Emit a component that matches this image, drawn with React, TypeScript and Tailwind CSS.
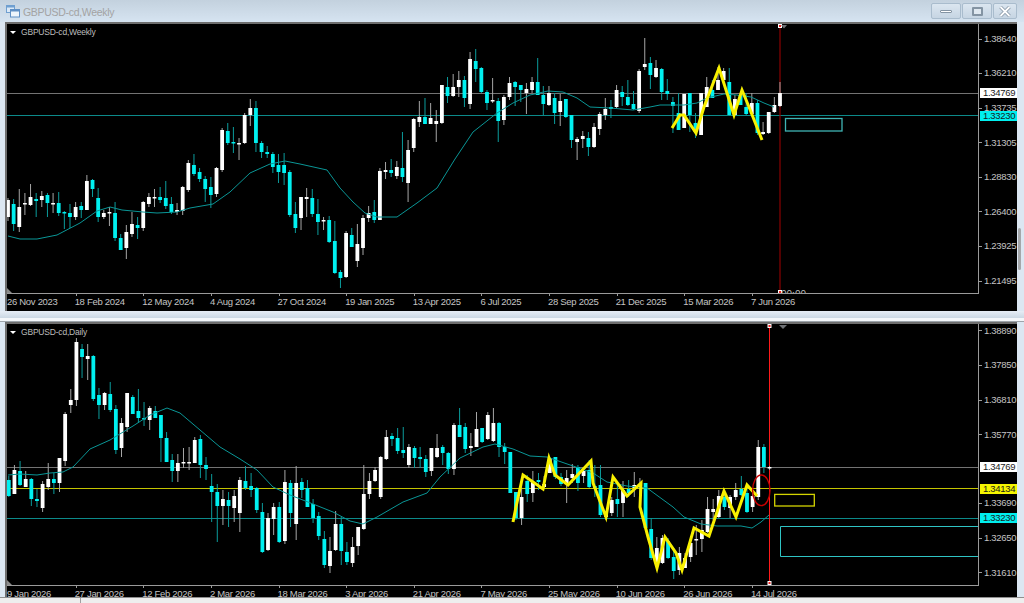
type Candle = [number, number, number, number, number];
type Point = [number, number];

// [high, body top, body bottom, low, 1 = white / 0 = cyan], in page pixels
const weeklyCandles: Candle[] = [
  [198,200,217,221,1],[199,204,224,231,0],[189,207,227,232,1],[193,203,204,215,1],[184,197,205,206,1],[193,199,201,217,0],
  [191,196,200,207,1],[193,195,203,217,0],[193,203,204,213,1],[192,203,213,216,0],[211,212,213,229,0],[204,213,217,228,0],
  [202,207,217,220,1],[202,206,210,218,0],[175,181,210,210,1],[179,180,189,197,0],[188,198,217,222,0],[210,213,217,219,1],
  [207,212,213,226,1],[202,213,238,241,0],[234,238,250,250,0],[225,232,248,259,1],[212,224,234,237,1],[217,225,228,239,0],
  [201,202,228,231,1],[193,197,204,207,1],[189,197,198,207,1],[187,197,200,203,0],[181,198,206,209,0],[197,204,212,214,0],
  [203,210,212,215,1],[186,187,211,215,1],[160,163,190,192,1],[154,165,174,176,0],[168,172,179,182,0],[176,179,189,202,0],
  [177,187,195,208,0],[167,168,194,197,1],[128,130,170,172,1],[123,131,143,145,0],[127,142,143,153,0],[138,143,144,160,1],
  [113,115,143,144,1],[99,108,115,126,1],[101,108,143,152,0],[141,143,152,158,0],[146,152,154,158,0],[152,154,167,173,0],
  [154,165,172,183,0],[153,165,173,185,0],[170,172,215,217,0],[202,214,228,233,0],[197,197,218,230,1],[188,197,199,217,1],
  [189,198,214,217,0],[199,214,222,235,0],[217,220,221,230,1],[216,220,242,243,0],[221,241,273,274,0],[270,272,278,288,0],
  [231,233,277,278,1],[228,235,247,247,0],[224,244,261,267,1],[215,218,248,255,1],[206,213,218,222,1],[200,212,220,223,0],
  [168,171,220,220,1],[162,170,172,179,1],[159,170,173,177,0],[161,167,176,179,1],[132,168,177,182,0],[140,150,183,202,1],
  [118,119,148,152,1],[101,117,122,127,1],[98,117,124,124,0],[103,118,124,124,1],[110,121,124,142,1],[85,85,123,124,1],
  [77,87,96,103,0],[74,87,96,97,1],[71,80,87,97,1],[76,80,98,107,0],[52,59,104,109,1],[49,61,69,82,0],
  [67,68,92,93,0],[90,92,103,110,0],[78,100,101,103,1],[98,101,121,142,0],[95,97,120,125,1],[77,83,97,100,1],
  [81,82,87,106,0],[85,85,90,102,0],[83,89,93,114,1],[77,82,90,93,1],[58,82,95,95,0],[86,95,104,115,0],
  [86,93,105,106,1],[93,98,113,124,0],[94,101,112,126,1],[99,99,117,118,0],[115,115,140,148,0],[137,139,142,160,1],
  [131,136,139,148,1],[132,138,147,156,0],[123,127,147,148,1],[112,114,129,135,1],[98,109,115,120,1],[100,107,109,118,0],
  [85,90,107,108,1],[86,92,97,106,0],[80,97,105,106,0],[91,104,109,110,0],[69,71,111,113,1],[38,64,67,70,1],
  [57,63,75,89,0],[60,68,77,78,1],[68,69,92,100,0],[79,91,94,100,0],[97,102,106,133,0],[93,113,130,130,0],
  [94,94,128,128,1],[93,93,115,132,0],[113,123,132,138,0],[93,93,135,135,1],[77,87,107,107,1],[80,90,98,98,0],
  [67,80,90,90,1],[68,71,80,80,1],[68,82,115,116,0],[95,99,115,115,1],[93,95,105,105,0],[93,107,114,115,0],
  [93,103,114,114,1],[100,103,133,135,0],[122,132,134,135,1],[112,112,133,134,1],[97,105,112,113,1],[82,93,106,107,1],
];

const dailyCandles: Candle[] = [
  [476,480,496,497,0],[465,470,494,494,1],[461,471,485,486,0],[471,479,487,487,1],[478,479,499,506,0],[489,499,501,507,0],
  [481,484,508,512,1],[463,479,487,490,1],[473,479,483,494,0],[458,458,483,492,1],[412,414,461,466,1],[389,400,405,413,1],
  [338,342,400,406,1],[344,349,357,378,0],[344,356,359,380,1],[355,356,399,401,0],[388,395,405,419,0],[392,393,405,410,1],
  [382,394,410,412,0],[405,409,450,454,0],[418,423,448,457,1],[393,393,427,432,1],[395,397,414,414,0],[389,411,418,423,0],
  [402,418,419,426,0],[406,408,420,430,1],[406,411,418,418,0],[415,415,438,462,0],[432,438,462,462,0],[454,460,471,482,0],
  [454,463,471,482,1],[448,462,463,468,1],[447,462,463,470,1],[437,440,463,463,1],[435,439,465,478,0],[457,465,469,480,0],
  [474,486,492,522,0],[484,492,506,542,0],[490,499,506,525,1],[492,500,506,527,0],[490,496,508,522,1],[477,480,513,532,1],
  [466,481,488,490,0],[473,486,490,497,0],[487,488,510,513,0],[503,512,552,553,0],[513,518,550,551,1],[503,507,519,535,1],
  [502,507,542,543,0],[470,482,541,544,1],[480,483,513,527,0],[466,483,524,540,1],[478,482,490,498,0],[480,488,507,507,0],
  [499,504,518,523,0],[512,516,536,540,0],[531,539,565,568,0],[537,551,566,573,1],[511,524,550,551,1],[517,524,551,565,0],
  [542,552,562,565,0],[537,547,563,567,1],[527,527,546,555,1],[465,494,529,530,1],[473,481,494,499,1],[467,470,481,482,1],
  [456,457,497,499,1],[430,437,459,460,1],[433,436,439,446,0],[428,438,451,454,0],[427,450,453,458,0],[444,447,465,468,1],
  [446,448,458,468,0],[447,457,459,468,0],[455,459,472,477,0],[448,448,471,476,1],[434,448,457,458,1],[445,447,453,465,0],
  [452,453,469,474,0],[423,425,469,475,1],[408,425,437,437,0],[423,427,449,453,0],[433,446,448,456,1],[412,429,447,447,1],
  [428,428,442,443,0],[412,415,439,440,1],[408,423,441,442,1],[422,423,447,457,0],[443,447,452,464,0],[452,452,493,493,0],
  [492,492,518,520,0],[477,497,518,525,1],[475,481,494,502,0],[471,482,493,502,1],[473,480,482,490,0],[476,484,487,488,1],
  [457,458,473,473,1],[457,457,477,479,0],[473,477,484,486,0],[470,478,483,503,1],[464,474,478,483,1],[465,467,483,491,0],
  [467,471,476,483,1],[460,470,487,488,0],[465,486,488,497,0],[465,485,515,517,0],[513,513,517,520,1],[497,500,513,516,1],
  [485,499,504,517,0],[481,490,503,517,1],[480,489,493,497,0],[472,485,488,497,1],[478,484,487,497,1],[483,483,528,528,0],
  [518,529,558,560,0],[537,548,562,570,1],[535,538,563,564,1],[538,541,558,559,0],[548,557,571,579,0],[547,553,570,575,1],
  [553,558,568,568,1],[537,543,557,562,1],[525,539,540,555,1],[520,530,539,552,1],[497,509,532,533,1],[499,509,512,520,1],
  [490,496,517,518,1],[490,497,507,510,0],[495,497,508,518,1],[483,490,497,500,1],[476,489,495,496,0],[484,493,512,513,0],
  [493,496,507,512,1],[440,447,497,500,1],[444,447,467,473,0],[466,467,468,470,1],
];

const weeklyMa: Point[] = [[8,236],[20,239],[37,239],[57,235],[80,223],[97,211],[110,207],[122,210],[143,212],[157,213],[177,212],[190,208],[213,204],[230,192],[250,173],[270,164],[285,161],[300,164],[327,170],[340,188],[353,202],[365,213],[377,217],[397,217],[417,203],[437,188],[455,159],[473,132],[497,113],[513,103],[530,95],[548,91],[563,92],[577,98],[590,107],[610,108],[633,110],[650,107],[660,105],[684,105],[697,103],[707,98],[724,94],[737,95],[751,97],[764,103],[774,107]];
const dailyMa: Point[] = [[8,475],[20,474],[37,475],[50,473],[63,472],[73,467],[90,449],[110,440],[133,426],[150,415],[167,408],[180,413],[200,430],[220,447],[240,459],[257,470],[273,487],[290,495],[313,504],[333,512],[350,521],[363,524],[377,517],[403,502],[427,493],[440,477],[460,458],[483,447],[495,444],[513,449],[530,456],[547,457],[573,466],[593,473],[607,482],[627,486],[647,488],[673,507],[684,517],[701,524],[717,526],[741,526],[752,528],[761,522],[769,515]];
const weeklyZigzag: Point[] = [[672,128],[680,115],[684,115],[696,133],[704,107],[719,68],[734,115],[742,90],[749,107],[762,140]];
const dailyZigzag: Point[] = [[513,522],[516,507],[523,475],[543,489],[549,458],[555,475],[568,485],[591,461],[593,483],[606,517],[613,477],[627,496],[641,483],[640,507],[648,537],[657,568],[665,537],[676,553],[682,570],[694,528],[709,536],[724,491],[736,517],[747,485],[757,496]];

const weeklyPrices = [
  { y: 39, label: "1.38640" },
  { y: 73, label: "1.36210" },
  { y: 108, label: "1.33735" },
  { y: 142.5, label: "1.31305" },
  { y: 177, label: "1.28830" },
  { y: 211.5, label: "1.26400" },
  { y: 246, label: "1.23925" },
  { y: 281, label: "1.21495" },
];
const dailyPrices = [
  { y: 330.5, label: "1.38890" },
  { y: 365, label: "1.37850" },
  { y: 400, label: "1.36810" },
  { y: 434.5, label: "1.35770" },
  { y: 503, label: "1.33690" },
  { y: 538, label: "1.32650" },
  { y: 572.5, label: "1.31610" },
];
const weeklyTags = [
  { y: 93.5, label: "1.34769", color: "bg-white" },
  { y: 116, label: "1.33230", color: "bg-[#00eeee]" },
];
const dailyTags = [
  { y: 467, label: "1.34769", color: "bg-white" },
  { y: 489, label: "1.34134", color: "bg-[#f5f500]" },
  { y: 518.5, label: "1.33230", color: "bg-[#00eeee]" },
];
const weeklyDates = ["26 Nov 2023","18 Feb 2024","12 May 2024","4 Aug 2024","27 Oct 2024","19 Jan 2025","13 Apr 2025","6 Jul 2025","28 Sep 2025","21 Dec 2025","15 Mar 2026","7 Jun 2026"];
const dailyDates = ["9 Jan 2026","27 Jan 2026","12 Feb 2026","2 Mar 2026","18 Mar 2026","3 Apr 2026","21 Apr 2026","7 May 2026","25 May 2026","10 Jun 2026","26 Jun 2026","14 Jul 2026"];

const toLine = (pts: Point[]) => pts.map((p) => p.join(",")).join(" ");

function Candles({ data, start }: { data: Candle[]; start: number }) {
  return (
    <g>
      {data.map(([high, top, bottom, low, white], i) => {
        const x = start + 5.635 * i;
        return (
          <g key={i}>
            <line x1={x} x2={x} y1={high} y2={low} stroke={white ? "#a6a6a6" : "#0b9c9c"} />
            <rect x={x - 1.9} y={top} width={3.8} height={Math.max(bottom - top, 1.5)} fill={white ? "#ffffff" : "#00f0f0"} />
          </g>
        );
      })}
    </g>
  );
}

function Marker({ x, y }: { x: number; y: number }) {
  return (
    <g>
      <rect x={x - 2} y={y - 2} width={4} height={4} fill="#ffffff" />
      <rect x={x - 1} y={y - 1} width={2} height={2} fill="#f02020" />
    </g>
  );
}

function PriceAxis({
  prices,
  tags,
  top,
}: {
  prices: { y: number; label: string }[];
  tags: { y: number; label: string; color: string }[];
  top: number;
}) {
  return (
    <div className="relative w-[38px] shrink-0 font-['Liberation_Sans',sans-serif] text-[9.5px] leading-[12px] tracking-[-0.3px]">
      {prices.map((p) => (
        <div key={p.label} className="absolute left-0 flex items-center text-[#c4c4c4]" style={{ top: p.y - top - 6 }}>
          <span className="mr-[2px] h-px w-[3px] bg-[#9a9a9a]" />
          <span>{p.label}</span>
        </div>
      ))}
      {tags.map((t) => (
        <div
          key={t.label}
          className={`absolute left-[1px] right-0 pl-[3px] text-[#1a1a1a] ${t.color}`}
          style={{ top: t.y - top - 5.5, height: 10, lineHeight: "10px" }}
        >
          {t.label}
        </div>
      ))}
    </div>
  );
}

function TimeAxis({ dates, height }: { dates: string[]; height: string }) {
  return (
    <div className={`flex overflow-hidden ${height}`}>
      {dates.map((d, i) => (
        <div key={d} className="relative w-[67.63px] shrink-0">
          {i > 0 && <span className="absolute left-[1px] top-0 h-[2px] w-px bg-[#9a9a9a]" />}
          <span className="absolute left-0 top-[1px] whitespace-nowrap font-['Liberation_Sans',sans-serif] text-[9.5px] leading-[13px] tracking-[-0.3px] text-[#c4c4c4]">
            {d}
          </span>
        </div>
      ))}
    </div>
  );
}

function ChartTitle({ text }: { text: string }) {
  return (
    <div className="absolute left-[3px] top-[3px] flex items-center gap-[5px] font-['Liberation_Sans',sans-serif] text-[8.5px] leading-[11px] tracking-[-0.2px] text-[#bdbdbd]">
      <span className="h-0 w-0 border-x-[3px] border-t-[3px] border-x-transparent border-t-white" />
      <span>{text}</span>
    </div>
  );
}

function WindowButton({ children, width }: { children: React.ReactNode; width: string }) {
  return (
    <div className={`flex h-[16px] items-center justify-center rounded-[2px] border border-[#a9bccd] bg-gradient-to-b from-[#dbe6f0] to-[#c6d5e3] ${width}`}>
      {children}
    </div>
  );
}

function TitleBar() {
  return (
    <div className="flex h-[22px] shrink-0 items-start bg-gradient-to-b from-[#c3d1de] to-[#d6e4f1]">
      <svg width="14" height="14" viewBox="0 0 14 14" className="ml-[6px] mt-[4px]">
        <rect x="0.5" y="1.5" width="8" height="7" fill="#dbe9f7" stroke="#6f9fd0" />
        <rect x="0.5" y="1.5" width="8" height="2" fill="#6f9fd0" />
        <rect x="4.5" y="5.5" width="9" height="7.5" fill="#eef5fb" stroke="#5f8fc4" />
        <rect x="4.5" y="5.5" width="9" height="2" fill="#5f8fc4" />
      </svg>
      <span className="ml-[3px] mt-[5px] font-['Liberation_Sans',sans-serif] text-[10.5px] leading-[14px] tracking-[-0.3px] text-[#a3a3a3]">
        GBPUSD-cd,Weekly
      </span>
      <div className="ml-auto mr-[7px] mt-[3px] flex gap-[1px]">
        <WindowButton width="w-[30px]">
          <span className="h-[3px] w-[12px] rounded-[1px] border border-[#8494a3] bg-white" />
        </WindowButton>
        <WindowButton width="w-[30px]">
          <span className="h-[9px] w-[11px] rounded-[1px] border-2 border-[#8494a3] bg-[#dfe8f0]" />
        </WindowButton>
        <WindowButton width="w-[24px]">
          <svg width="12" height="11" viewBox="0 0 12 11">
            <path d="M1.5 1 L10.5 10 M10.5 1 L1.5 10" stroke="#8494a3" strokeWidth="3.4" />
            <path d="M1.5 1 L10.5 10 M10.5 1 L1.5 10" stroke="#ffffff" strokeWidth="1.8" />
          </svg>
        </WindowButton>
      </div>
    </div>
  );
}

export default function App() {
  return (
    <div className="relative flex h-[603px] w-[1024px] flex-col overflow-hidden bg-[#dce7f2]">
      <TitleBar />

      {/* weekly */}
      <div className="ml-[5px] mr-[7px] flex h-[289px] shrink-0 flex-col border-l-2 border-t-2 border-[#6e6e6e] bg-black">
        <div className="flex h-[270px]">
          <div className="relative w-[972px] border-b border-r border-[#9a9a9a]">
            <svg width="971" height="269" viewBox="7 24 971 269" className="block">
              <line x1="7" x2="978" y1="93.5" y2="93.5" stroke="#737373" />
              <line x1="7" x2="978" y1="115.5" y2="115.5" stroke="#0c8a8a" strokeWidth="1.2" />
              <line x1="780" x2="780" y1="24" y2="293" stroke="#8a0000" strokeWidth="1.2" />
              <Candles data={weeklyCandles} start={8} />
              <polyline points={toLine(weeklyMa)} fill="none" stroke="#0a9696" strokeWidth="1" />
              <polyline points={toLine(weeklyZigzag)} fill="none" stroke="#f8f000" strokeWidth="3" />
              <rect x="785.5" y="118.5" width="56.5" height="12.5" fill="none" stroke="#3fb4b4" strokeWidth="1.3" />
              <Marker x={780} y={26} />
              <Marker x={780} y={292} />
              <polygon points="781,25 787,25 784,28.5" fill="#6f7276" />
              <polygon points="7,293 12,293 7,288" fill="#8a8a8a" />
              <text x="781" y="297.5" fontSize="10" fill="#bdbdbd" fontFamily="Liberation Sans">00:00</text>
            </svg>
            <ChartTitle text="GBPUSD-cd,Weekly" />
          </div>
          <PriceAxis prices={weeklyPrices} tags={weeklyTags} top={24} />
        </div>
        <TimeAxis dates={weeklyDates} height="h-[17px]" />
      </div>

      {/* splitter */}
      <div className="mr-0 flex h-[11px] shrink-0 flex-col">
        <div className="h-[7px] bg-gradient-to-b from-[#e6edf5] to-[#cbd8e4]" />
        <div className="h-[3px] bg-[#f4f7fa]" />
        <div className="h-px bg-[#9da4aa]" />
      </div>

      {/* daily */}
      <div className="ml-[5px] mr-[7px] flex h-[275px] shrink-0 flex-col border-l-2 border-t-2 border-[#6e6e6e] bg-black">
        <div className="flex h-[262px]">
          <div className="relative w-[972px] border-b border-r border-[#9a9a9a]">
            <svg width="971" height="261" viewBox="7 324 971 261" className="block">
              <line x1="7" x2="978" y1="467.5" y2="467.5" stroke="#737373" />
              <line x1="7" x2="978" y1="488.5" y2="488.5" stroke="#c4c400" />
              <line x1="7" x2="978" y1="518.5" y2="518.5" stroke="#0c8a8a" strokeWidth="1.2" />
              <line x1="769.5" x2="769.5" y1="324" y2="585" stroke="#ff1a1a" />
              <Candles data={dailyCandles} start={8.8} />
              <polyline points={toLine(dailyMa)} fill="none" stroke="#0a9696" strokeWidth="1" />
              <polyline points={toLine(dailyZigzag)} fill="none" stroke="#f8f000" strokeWidth="3" />
              <rect x="774.7" y="494.4" width="39.6" height="11.6" fill="none" stroke="#d4d400" strokeWidth="1.3" />
              <path d="M978 526.5 H780.5 V556.5 H978" fill="none" stroke="#2fc4c4" />
              <ellipse cx="761.3" cy="490.3" rx="8.7" ry="15.3" fill="none" stroke="#c80000" strokeWidth="1.4" />
              <Marker x={769.5} y={326} />
              <Marker x={769.5} y={583} />
              <polygon points="779,325 787,325 783,329" fill="#6f7276" />
              <polygon points="7,585 12,585 7,580" fill="#8a8a8a" />
            </svg>
            <ChartTitle text="GBPUSD-cd,Daily" />
          </div>
          <PriceAxis prices={dailyPrices} tags={dailyTags} top={324} />
        </div>
        <TimeAxis dates={dailyDates} height="h-[11px]" />
      </div>

      {/* bottom status strip */}
      <div className="flex h-[6px] shrink-0 border-t border-[#8f8f8f] bg-[#eeeeee]">
        <span className="ml-[80px] h-full w-px bg-[#a0a0a0]" />
      </div>

      {/* right edge scrollbar thumb */}
      <div className="absolute right-[3px] top-[228px] h-[42px] w-[3px] rounded-sm bg-[#a4a7aa]" />
    </div>
  );
}
